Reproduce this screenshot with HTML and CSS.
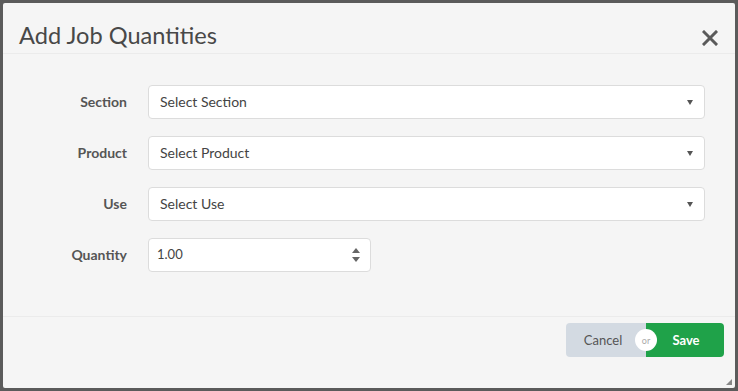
FILE: index.html
```html
<!DOCTYPE html>
<html lang="en">
  <head>
    <meta charset="UTF-8" />
    <title>Add Job Quantities</title>
    <link rel="stylesheet" href="styles.css">
  </head>
  <body>
    <div class="modal">
      <!-- header -->
      <div class="modal-header">
        <h2 class="modal-title">Add Job Quantities</h2>
        <span class="close">
          <svg width="16" height="16" viewBox="0 0 16 16">
            <path d="M2 2 L14 14 M14 2 L2 14" stroke="#5a5a5a" stroke-width="3" stroke-linecap="square" />
          </svg>
        </span>
      </div>
      <!-- form -->
      <div class="modal-body">
        <div class="row">
          <label class="lbl">Section</label>
          <div class="field select">Select Section<span class="caret"></span></div>
        </div>
        <div class="row">
          <label class="lbl">Product</label>
          <div class="field select">Select Product<span class="caret"></span></div>
        </div>
        <div class="row">
          <label class="lbl">Use</label>
          <div class="field select">Select Use<span class="caret"></span></div>
        </div>
        <div class="row">
          <label class="lbl">Quantity</label>
          <div class="field number">
            1.00
            <span class="spin"><span class="up"></span><span class="down"></span></span>
          </div>
        </div>
      </div>
      <!-- footer -->
      <div class="modal-footer">
        <div class="btns">
          <button class="btn cancel">Cancel</button>
          <span class="or">or</span>
          <button class="btn save">Save</button>
        </div>
      </div>
      <span class="grip"></span>
    </div>
  </body>
</html>
```
FILE: styles.css
```css
* {
  box-sizing: border-box;
  margin: 0;
  padding: 0;
}
body {
  font-family: Lato, "Open Sans", sans-serif;
  background: #5b5b5b;
  padding: 3px;
  height: 391px;
  overflow: hidden;
}
.modal {
  position: relative;
  width: 732px;
  height: 385px;
  background: #f5f5f5;
  border-radius: 2px;
  display: flex;
  flex-direction: column;
}
.modal-header {
  display: flex;
  justify-content: space-between;
  align-items: center;
  padding: 19px 17px 5px 16px;
  border-bottom: 1px solid #ebebeb;
}
.modal-title {
  font-size: 23.6px;
  line-height: 26px;
  font-weight: 400;
  color: #484848;
}
.close {
  display: flex;
  margin-top: 6px;
}
.modal-body {
  padding: 31px 30px 44px 0;
  display: flex;
  flex-direction: column;
  gap: 17px;
  border-bottom: 1px solid #ebebeb;
}
.row {
  display: flex;
  align-items: center;
  gap: 21px;
}
.lbl {
  width: 124px;
  text-align: right;
  font-size: 14px;
  font-weight: 700;
  color: #555;
  padding-bottom: 2px;
}
.field {
  position: relative;
  height: 34px;
  background: #fff;
  border: 1px solid #dcdcdc;
  border-radius: 4px;
  display: flex;
  align-items: center;
  font-size: 14px;
  color: #444;
  padding-bottom: 2px;
}
.select {
  flex: 1;
  padding-left: 11px;
}
.caret {
  position: absolute;
  right: 11px;
  top: 14px;
  border-left: 3.5px solid transparent;
  border-right: 3.5px solid transparent;
  border-top: 5px solid #555;
}
.number {
  width: 223px;
  padding-left: 8px;
  font-size: 13px;
}
.spin {
  position: absolute;
  right: 10px;
  top: 9px;
  display: flex;
  flex-direction: column;
  gap: 4px;
}
.up {
  border-left: 4px solid transparent;
  border-right: 4px solid transparent;
  border-bottom: 5px solid #666;
}
.down {
  border-left: 4px solid transparent;
  border-right: 4px solid transparent;
  border-top: 5px solid #666;
}
.modal-footer {
  display: flex;
  justify-content: flex-end;
  padding: 6px 11px 0 0;
}
.btns {
  position: relative;
  display: flex;
}
.btn {
  height: 34px;
  border: none;
  font-family: Lato, "Open Sans", sans-serif;
  font-size: 13px;
}
.cancel {
  width: 80px;
  background: #d3dae2;
  color: #555;
  border-radius: 4px 0 0 4px;
  padding-right: 6px;
}
.save {
  width: 78px;
  background: #1fa249;
  color: #fff;
  font-weight: 700;
  border-radius: 0 4px 4px 0;
  padding-left: 2px;
}
.or {
  position: absolute;
  left: 69px;
  top: 6px;
  width: 22px;
  height: 22px;
  border-radius: 50%;
  background: #fff;
  color: #aaa;
  font-size: 9px;
  display: flex;
  align-items: center;
  justify-content: center;
}
.grip {
  position: absolute;
  right: 3px;
  bottom: 3px;
  width: 0;
  height: 0;
  border-left: 6px solid transparent;
  border-bottom: 6px solid #888;
}
```
